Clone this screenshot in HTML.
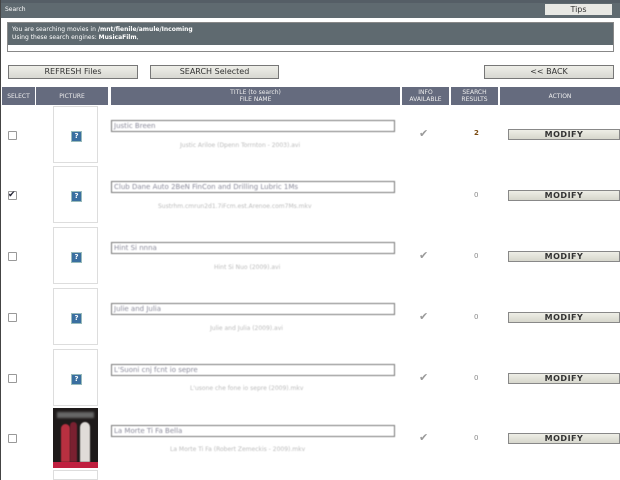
<!DOCTYPE html><html><head><style>
body{margin:0;width:620px;height:480px;overflow:hidden;background:#fff;font-family:"DejaVu Sans","Liberation Sans",sans-serif;position:relative}
.a{position:absolute}
.btn{position:absolute;background:linear-gradient(#eeeee8,#d8d8d2);border:1px solid #777;font-size:8px;color:#333;text-align:center;box-sizing:border-box}
.hd{position:absolute;top:87px;height:18px;background:#656b7e;color:#eee;font-size:6px;text-align:center;box-sizing:border-box;display:flex;align-items:center;justify-content:center;line-height:7px}
.pic{position:absolute;left:53px;width:45px;height:57px;border:1px solid #ddd;box-sizing:border-box}
.q{position:absolute;left:17px;top:24px;width:9px;height:9px;background:#3a6fa0;border:1px solid #9bb;color:#fff;font-size:7px;line-height:9px;text-align:center;font-weight:bold}
.inp{position:absolute;left:111px;width:284px;height:12px;border:1px solid #777;box-sizing:border-box;font-size:7px;color:#8a8a9a;padding-left:2px;line-height:10px;filter:blur(0.5px)}
.fn{position:absolute;font-size:6px;color:#bbb;filter:blur(0.5px)}
.chk{position:absolute;left:8px;width:7px;height:7px;border:1px solid #999;border-radius:1px}
.mod{position:absolute;left:508px;width:112px;height:11px;background:linear-gradient(#eeeee6,#d6d6cc);border:1px solid #888;box-sizing:border-box;font-size:8px;font-weight:bold;color:#333;text-align:center;line-height:9px;letter-spacing:.5px}
.ok{position:absolute;left:419px;font-size:11px;color:#999;font-weight:bold}
.res{position:absolute;left:474px;font-size:7px;color:#888}
</style></head><body>
<div class="a" style="left:0;top:0;width:620px;height:3px;background:#555e66"></div>
<div class="a" style="left:0;top:0;width:1px;height:480px;background:#444"></div>
<div class="a" style="left:1px;top:3px;width:619px;height:15px;background:#5f6a70;color:#fff;font-size:6px;line-height:13px;padding-left:4px;box-sizing:border-box">Search</div>
<div class="a" style="left:545px;top:4px;width:67px;height:11px;background:#e8e8e4;font-size:8px;color:#333;text-align:center;line-height:11px">Tips</div>
<div class="a" style="left:7px;top:22px;width:607px;height:30px;border:1px solid #888;box-sizing:border-box;background:#fff"></div>
<div class="a" style="left:8px;top:23px;width:605px;height:22px;background:#5f6a70;color:#fff;font-size:6px;line-height:8px;padding:3px 4px;box-sizing:border-box">You are searching movies in <b>/mnt/fienile/amule/Incoming</b><br>Using these search engines: <b>MusicaFilm</b>,</div>
<div class="btn" style="left:8px;top:65px;width:130px;height:14px;line-height:12px">REFRESH Files</div>
<div class="btn" style="left:150px;top:65px;width:129px;height:14px;line-height:12px">SEARCH Selected</div>
<div class="btn" style="left:484px;top:65px;width:130px;height:14px;line-height:12px">&lt;&lt; BACK</div>
<div class="hd" style="left:2px;width:33px">SELECT</div>
<div class="hd" style="left:36px;width:72px">PICTURE</div>
<div class="hd" style="left:111px;width:289px">TITLE (to search)<br>FILE NAME</div>
<div class="hd" style="left:402px;width:47px">INFO<br>AVAILABLE</div>
<div class="hd" style="left:451px;width:47px">SEARCH<br>RESULTS</div>
<div class="hd" style="left:500px;width:120px">ACTION</div>

<div class="pic" style="top:106px"><div class="q">?</div></div>
<div class="chk" style="top:131px"></div>
<div class="inp" style="top:120px">Justic Breen</div>
<div class="fn" style="left:180px;top:142px">Justic Ariloe (Dpenn Torrnton - 2003).avi</div>
<div class="ok" style="top:127px">✔</div><div class="res" style="top:129px;color:#7a4a10;font-weight:bold">2</div>
<div class="mod" style="top:129px">MODIFY</div>

<div class="pic" style="top:166px"><div class="q">?</div></div>
<div class="chk" style="top:191px;font-size:9px;line-height:6px;color:#223;text-indent:-1px">✔</div>
<div class="inp" style="top:181px">Club Dane Auto 2BeN FinCon and Drilling Lubric 1Ms</div>
<div class="fn" style="left:158px;top:203px">Sustrhm.cmrun2d1.7iFcm.est.Arenoe.com7Ms.mkv</div>
<div class="res" style="top:191px">0</div>
<div class="mod" style="top:190px">MODIFY</div>

<div class="pic" style="top:227px"><div class="q">?</div></div>
<div class="chk" style="top:252px"></div>
<div class="inp" style="top:242px">Hint Si nnna</div>
<div class="fn" style="left:214px;top:264px">Hint Si Nuo (2009).avi</div>
<div class="ok" style="top:249px">✔</div><div class="res" style="top:252px">0</div>
<div class="mod" style="top:251px">MODIFY</div>

<div class="pic" style="top:288px"><div class="q">?</div></div>
<div class="chk" style="top:313px"></div>
<div class="inp" style="top:303px">Julie and Julia</div>
<div class="fn" style="left:210px;top:325px">Julie and Julia (2009).avi</div>
<div class="ok" style="top:310px">✔</div><div class="res" style="top:313px">0</div>
<div class="mod" style="top:312px">MODIFY</div>

<div class="pic" style="top:349px"><div class="q">?</div></div>
<div class="chk" style="top:374px"></div>
<div class="inp" style="top:364px">L'Suoni cnj fcnt io sepre</div>
<div class="fn" style="left:190px;top:385px">L'usone che fone io sepre (2009).mkv</div>
<div class="ok" style="top:371px">✔</div><div class="res" style="top:374px">0</div>
<div class="mod" style="top:373px">MODIFY</div>

<div class="pic" style="border:none;background:#1e1a1a;left:53px;top:408px;height:60px;overflow:hidden">
<div class="a" style="left:4px;top:4px;width:37px;height:6px;background:#666;filter:blur(1px)"></div>
<div class="a" style="left:8px;top:16px;width:9px;height:38px;background:#b83040;border-radius:5px 5px 0 0;filter:blur(.6px)"></div>
<div class="a" style="left:17px;top:14px;width:7px;height:40px;background:#7a2030;border-radius:4px 4px 0 0;filter:blur(.6px)"></div>
<div class="a" style="left:27px;top:14px;width:10px;height:40px;background:#e0dcd8;border-radius:5px 5px 0 0;filter:blur(.6px)"></div>
<div class="a" style="left:0;top:54px;width:45px;height:6px;background:#c02040"></div></div>
<div class="chk" style="top:434px"></div>
<div class="inp" style="top:425px">La Morte Ti Fa Bella</div>
<div class="fn" style="left:170px;top:446px">La Morte Ti Fa (Robert Zemeckis - 2009).mkv</div>
<div class="ok" style="top:431px">✔</div><div class="res" style="top:434px">0</div>
<div class="mod" style="top:433px">MODIFY</div>
<div class="a" style="left:53px;top:470px;width:45px;height:10px;border:1px solid #ddd;box-sizing:border-box"></div>
</body></html>
